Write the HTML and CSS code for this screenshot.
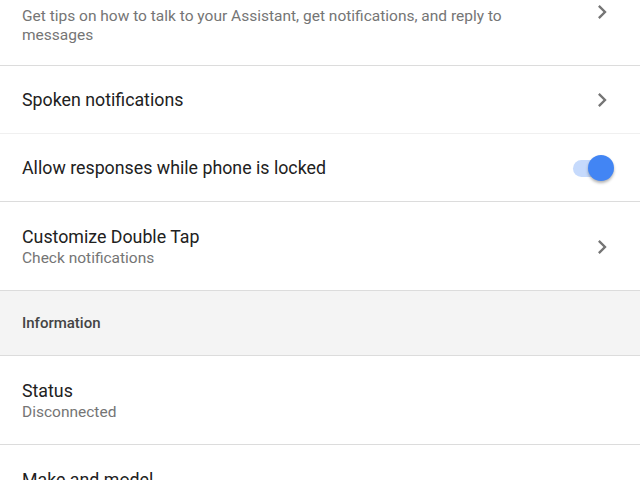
FILE: index.html
```html
<!DOCTYPE html>
<html>
<head>
<meta charset="utf-8">
<link rel="stylesheet" href="styles.css">
</head>
<body>
<div class="list">
  <div class="row first">
    <div class="text">
      <div class="title">Tips and notifications</div>
      <div class="sub">Get tips on how to talk to your Assistant, get notifications, and reply to messages</div>
    </div>
    <svg class="chev" viewBox="0 0 24 24"><path d="M8.6 16.6L13.2 12 8.6 7.4 10 6l6 6-6 6z"/></svg>
  </div>
  <div class="row single faint">
    <div class="text"><div class="title">Spoken notifications</div></div>
    <svg class="chev" viewBox="0 0 24 24"><path d="M8.6 16.6L13.2 12 8.6 7.4 10 6l6 6-6 6z"/></svg>
  </div>
  <div class="row single">
    <div class="text"><div class="title">Allow responses while phone is locked</div></div>
    <div class="toggle"><div class="track"></div><div class="thumb"></div></div>
  </div>
  <div class="row">
    <div class="text">
      <div class="title">Customize Double Tap</div>
      <div class="sub">Check notifications</div>
    </div>
    <svg class="chev" viewBox="0 0 24 24"><path d="M8.6 16.6L13.2 12 8.6 7.4 10 6l6 6-6 6z"/></svg>
  </div>
  <div class="header">Information</div>
  <div class="row">
    <div class="text">
      <div class="title">Status</div>
      <div class="sub">Disconnected</div>
    </div>
  </div>
  <div class="row">
    <div class="text">
      <div class="title">Make and model</div>
      <div class="sub">Unknown</div>
    </div>
  </div>
</div>
</body>
</html>
```
FILE: styles.css
```css
html, body {
  margin: 0;
  padding: 0;
  background: #ffffff;
  overflow: hidden;
}
body {
  font-family: Roboto, "Noto Sans", sans-serif;
  width: 640px;
  height: 480px;
}
.list {
  margin-top: -45px;
}
.row {
  display: flex;
  align-items: center;
  padding: 24px 22px 22px 22px;
  border-bottom: 1px solid #dcdcdc;
}
.row.first {
  padding-bottom: 20px;
}
.row.first .title {
  margin-bottom: 6px;
}
.row.single {
  padding: 23px 22px 22px 22px;
}
.row.faint {
  border-bottom-color: #f0f0f0;
}
.text {
  flex: 1;
  min-width: 0;
  padding-right: 70px;
}
.title {
  font-size: 17.8px;
  line-height: 22px;
  color: #212121;
}
.sub {
  font-size: 15.5px;
  line-height: 19px;
  margin-top: 1px;
  color: #757575;
}
.chev {
  width: 28px;
  height: 28px;
  fill: #757575;
  margin: -10px 2px -10px 0;
  flex: none;
}
.toggle {
  position: relative;
  width: 44px;
  height: 28px;
  flex: none;
  margin: -10px 4px -10px 0;
}
.track {
  position: absolute;
  left: 3px;
  top: 6px;
  width: 34px;
  height: 17px;
  border-radius: 9px;
  background: #c6dafc;
}
.thumb {
  position: absolute;
  left: 18px;
  top: 1px;
  width: 26px;
  height: 26px;
  border-radius: 50%;
  background: #4285f4;
  box-shadow: 0 2px 3px rgba(0,0,0,0.3);
}
.header {
  background: #f4f4f4;
  padding: 22px;
  font-size: 15px;
  line-height: 20px;
  font-weight: 500;
  color: #444444;
  border-bottom: 1px solid #dcdcdc;
}
```
